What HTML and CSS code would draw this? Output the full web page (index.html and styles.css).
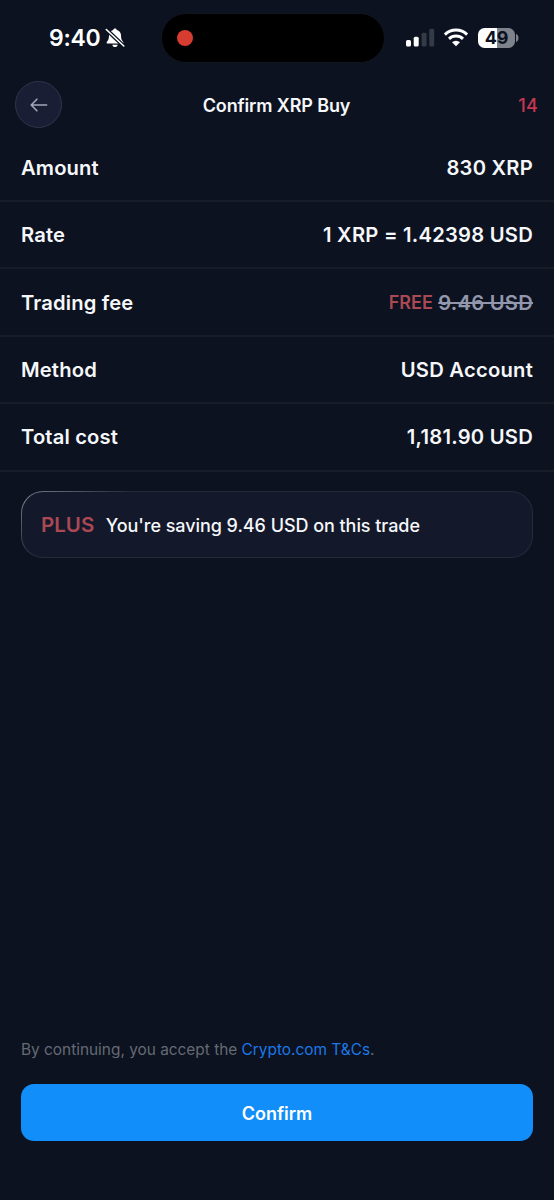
FILE: index.html
```html
<!DOCTYPE html>
<html lang="en">
<head>
<meta charset="utf-8">
<title>Confirm XRP Buy</title>
<link rel="stylesheet" href="styles.css">
</head>
<body>
<div class="screen">
  <div class="status">
    <div class="clock">
      <span class="time">9:40</span>
      <svg class="bell" width="20" height="20" viewBox="0 0 20 20">
        <path d="M10 .6c.9 0 1.600.6 1.800 1.400 2.700.7 4.200 2.600 4.200 5.200 0 3.600.7 5 1.900 6.200.9 1 .5 2.200-.7 2.200H2.800c-1.200 0-1.600-1.200-.7-2.200C3.300 12.200 4 10.800 4 7.200c0-2.600 1.500-4.500 4.200-5.200C8.400 1.200 9.100.6 10 .6z" fill="#fff"/>
        <path d="M7.300 16.800h5.400c-.3 1.500-1.300 2.300-2.700 2.300s-2.400-.8-2.700-2.300z" fill="#fff"/>
        <path d="M1.300 1.500 18.800 18" stroke="#0c121f" stroke-width="4"/>
        <path d="M1.300 1.500 18.800 18" stroke="#fff" stroke-width="1.600" stroke-linecap="round"/>
      </svg>
    </div>
    <div class="island"><span class="rec"></span></div>
    <div class="indicators">
      <svg class="signal" width="29" height="19" viewBox="0 0 29 19">
        <rect x="0" y="12" width="5" height="6.500" rx="1.500" fill="#fff"/>
        <rect x="7.700" y="8.700" width="5" height="9.800" rx="1.500" fill="#fff"/>
        <rect x="15.600" y="4.700" width="5" height="13.800" rx="1.500" fill="#343a46"/>
        <rect x="23.200" y="0.700" width="5" height="17.800" rx="1.500" fill="#343a46"/>
      </svg>
      <svg class="wifi" width="26" height="19" viewBox="0 0 26 19">
        <path d="M1.900 6.600a15.800 15.800 0 0 1 22.200 0" fill="none" stroke="#fff" stroke-width="3"/>
        <path d="M6 10.900a10 10 0 0 1 14 0" fill="none" stroke="#fff" stroke-width="2.900"/>
        <path d="M13 18.200 9 14.300a5.700 5.700 0 0 1 8 0z" fill="#fff"/>
      </svg>
      <div class="battery"><span>49</span></div>
      <svg class="cap" width="3" height="8" viewBox="0 0 3 8"><path d="M0 0c1.600.5 2.500 2 2.500 4S1.600 7.500 0 8z" fill="#7e828b"/></svg>
    </div>
  </div>

  <header class="header">
    <div class="back">
      <svg width="18" height="14" viewBox="0 0 18 14" fill="none" stroke="#a5a8ba" stroke-width="1.600" stroke-linecap="round" stroke-linejoin="round"><path d="M16.600 7H1.200M6.900 1.200 1.200 7l5.700 5.800"/></svg>
    </div>
    <h1 class="title">Confirm XRP Buy</h1>
    <span class="countdown">14</span>
  </header>

  <main class="details">
    <div class="row"><span class="label">Amount</span><span class="value">830 XRP</span></div>
    <div class="row"><span class="label">Rate</span><span class="value">1 XRP = 1.42398 USD</span></div>
    <div class="row"><span class="label">Trading fee</span><span class="value"><span class="free">FREE</span><s class="old">9.46 USD</s></span></div>
    <div class="row"><span class="label">Method</span><span class="value">USD Account</span></div>
    <div class="row"><span class="label">Total cost</span><span class="value">1,181.90 USD</span></div>
  </main>

  <section class="plus">
    <span class="plus-name">PLUS</span>
    <span class="plus-text">You're saving 9.46 USD on this trade</span>
  </section>

  <footer class="footer">
    <p class="terms">By continuing, you accept the <a class="link">Crypto.com T&amp;Cs</a>.</p>
    <button class="confirm">Confirm</button>
  </footer>
</div>
</body>
</html>
```

FILE: styles.css
```css
* { box-sizing: border-box; }
body { margin: 0; background: #0c121f; font-family: Inter, "Liberation Sans", sans-serif; color: #f5f7fa; }
.screen { width: 554px; height: 1200px; display: flex; flex-direction: column; overflow: hidden; }

.status { height: 76px; flex: none; display: grid; grid-template-columns: 161px 224px 1fr; }
.clock { display: flex; height: 76px; align-items: center; padding-left: 49px; gap: 5.5px; color: #fff; }
.time { font-size: 23px; font-weight: 600; letter-spacing: -0.3px; width: 50px; white-space: nowrap; }
.bell { flex: none; }
.island { margin-top: 13px; height: 50px; border-radius: 25px; background: #000; border: 1px solid #11151d; display: flex; align-items: center; padding-left: 15px; }
.rec { width: 16px; height: 16px; border-radius: 50%; background: #d63c2f; }
.indicators { display: flex; height: 75px; align-items: center; padding-left: 21px; }
.wifi { margin-left: 8px; }
.battery { margin-left: 9px; width: 37px; height: 20px; border-radius: 6.5px; background: linear-gradient(90deg, #fff 50%, #7e828b 50%); color: #0c121f; font-size: 18px; font-weight: 700; letter-spacing: -0.3px; line-height: 20px; text-align: center; }
.cap { margin-left: 1px; }

.header { height: 57px; flex: none; display: grid; grid-template-columns: 100px 1fr 100px; align-items: center; padding: 0 16px 0 15px; }
.back { width: 47px; height: 47px; border-radius: 50%; background: #1a1e34; border: 1px solid #30354c; display: flex; align-items: center; justify-content: center; }
.title { margin: 0; padding-top: 2px; text-align: center; font-size: 18px; font-weight: 600; letter-spacing: -0.12px; line-height: 24px; }
.countdown { padding-top: 1px; color: #c53752; font-size: 18px; font-weight: 500; letter-spacing: 0.2px; text-align: right; }

.details { flex: none; padding-top: 1.7px; }
.row { height: 67.4px; display: flex; align-items: center; justify-content: space-between; padding: 0 21px; border-bottom: 2px solid #161c28; font-size: 20.2px; font-weight: 600; white-space: nowrap; }
.label { letter-spacing: 0.15px; }
.value { display: flex; align-items: center; gap: 5.5px; letter-spacing: 0.24px; }
.free { color: #aa4953; font-size: 18px; letter-spacing: 0; }
.old { color: #9297ad; text-decoration-thickness: 2px; }

.plus { margin: 19.3px 21px 0 21px; height: 67px; flex: none; border-radius: 22px; border: 1.5px solid transparent; background: linear-gradient(#14182b, #14182b) padding-box, radial-gradient(ellipse 100px 60px at 8px 8px, #777b87, #242a38) border-box; display: flex; align-items: center; padding: 1px 0 0 19px; gap: 11.5px; white-space: nowrap; }
.plus-name { color: #aa4854; font-size: 20.5px; font-weight: 600; }
.plus-text { padding-top: 1px; font-size: 18px; font-weight: 500; letter-spacing: -0.05px; }

.footer { margin-top: auto; padding: 0 21px 59.5px 21px; }
.terms { margin: 0 0 23px; font-size: 15.4px; line-height: 22px; color: #656a74; white-space: nowrap; }
.link { color: #1c78e8; }
.confirm { display: block; width: 100%; height: 56.5px; padding: 3px 0 0; border: 0; border-radius: 13px; background: #118ef9; color: #fff; font: 600 18px/24px Inter, "Liberation Sans", sans-serif; }
```
